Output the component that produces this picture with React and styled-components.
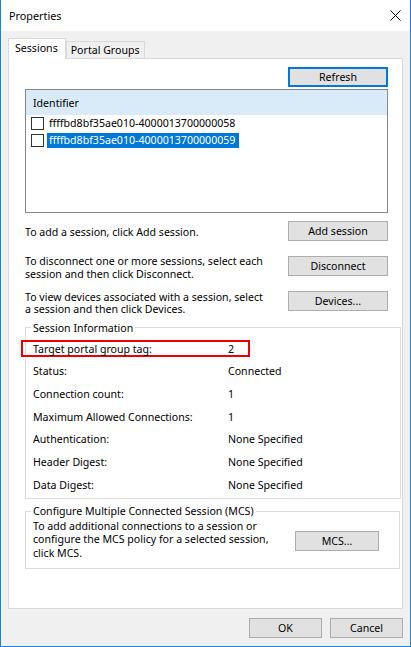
import React from "react";
import styled, { createGlobalStyle, css } from "styled-components";

const GlobalStyle = createGlobalStyle`
  * { box-sizing: border-box; }
  html, body { margin: 0; padding: 0; background: #ffffff; }
  body {
    font-family: "Noto Sans", "Open Sans", "Liberation Sans", sans-serif;
    font-size: 10.6px;
    color: #000;
  }
`;

const sessions = [
  { id: "ffffbd8bf35ae010-4000013700000058", selected: false },
  { id: "ffffbd8bf35ae010-4000013700000059", selected: true },
];

const sessionInfo = [
  { label: "Target portal group tag:", value: "2", highlight: true },
  { label: "Status:", value: "Connected" },
  { label: "Connection count:", value: "1" },
  { label: "Maximum Allowed Connections:", value: "1" },
  { label: "Authentication:", value: "None Specified" },
  { label: "Header Digest:", value: "None Specified" },
  { label: "Data Digest:", value: "None Specified" },
];

const CloseIcon = () => (
  <svg width="11" height="11" viewBox="0 0 11 11">
    <path d="M0.5 0.5 L10.5 10.5 M10.5 0.5 L0.5 10.5" stroke="#000" strokeWidth="1" />
  </svg>
);

const App = () => {
  return (
    <>
      <GlobalStyle />
      <Window>
        <TitleBar>
          <span>Properties</span>
          <CloseButton>
            <CloseIcon />
          </CloseButton>
        </TitleBar>

        <Body>
          <TabStrip>
            <Tab $active>Sessions</Tab>
            <Tab>Portal Groups</Tab>
          </TabStrip>

          <TabPanel>
            <RefreshRow>
              <Button $focused $width={100}>Refresh</Button>
            </RefreshRow>

            <ListBox>
              <ListHeader>Identifier</ListHeader>
              {sessions.map((s) => (
                <ListRow key={s.id}>
                  <CheckBox />
                  <ItemText $selected={s.selected}>{s.id}</ItemText>
                </ListRow>
              ))}
            </ListBox>

            <ActionRow>
              <HelpText>To add a session, click Add session.</HelpText>
              <Button $width={100}>Add session</Button>
            </ActionRow>
            <ActionRow>
              <HelpText>
                To disconnect one or more sessions, select each
                <br />
                session and then click Disconnect.
              </HelpText>
              <Button $width={100}>Disconnect</Button>
            </ActionRow>
            <ActionRow>
              <HelpText>
                To view devices associated with a session, select
                <br />
                a session and then click Devices.
              </HelpText>
              <Button $width={100}>Devices...</Button>
            </ActionRow>

            <GroupBox $right={1}>
              <Legend>Session Information</Legend>
              {sessionInfo.map((row) => (
                <InfoRow key={row.label} $highlight={row.highlight}>
                  <span>{row.label}</span>
                  <span>{row.value}</span>
                </InfoRow>
              ))}
            </GroupBox>

            <GroupBox $right={2} $top={5}>
              <Legend>Configure Multiple Connected Session (MCS)</Legend>
              <McsRow>
                <McsText>
                  To add additional connections to a session or
                  <br />
                  configure the MCS policy for a selected session,
                  <br />
                  click MCS.
                </McsText>
                <Button $width={84}>MCS...</Button>
              </McsRow>
            </GroupBox>
          </TabPanel>

          <Footer>
            <Button $width={73}>OK</Button>
            <Button $width={73}>Cancel</Button>
          </Footer>
        </Body>
      </Window>
    </>
  );
};

export default App;

/* ---------- Window chrome ---------- */

const Window = styled.div`
  width: 411px;
  height: 647px;
  display: flex;
  flex-direction: column;
  background: #f0f0f0;
  border: 1px solid #1883d7;
  border-top: none;
`;

const TitleBar = styled.div`
  height: 31px;
  flex-shrink: 0;
  background: #ffffff;
  display: flex;
  align-items: center;
  justify-content: space-between;
  padding: 0 9px 1px 8px;
  font-size: 10.8px;
`;

const CloseButton = styled.div`
  display: flex;
  align-items: center;
  padding-top: 1px;
`;

const Body = styled.div`
  flex: 1;
  display: flex;
  flex-direction: column;
  padding: 7px 7px 0 7px;
`;

/* ---------- Tabs ---------- */

const Tab = styled.div`
  height: 17px;
  padding: 0 4px;
  display: flex;
  align-items: center;
  background: #f0f0f0;
  border: 1px solid #d9d9d9;
  border-bottom: none;
  white-space: nowrap;

  ${(p) =>
    p.$active &&
    css`
      position: relative;
      z-index: 1;
      height: 21px;
      margin-bottom: -1px;
      padding: 0 7px 3px 6px;
      background: #ffffff;
    `}
`;

const TabStrip = styled.div`
  display: flex;
  align-items: flex-end;
  height: 20px;
`;

const TabPanel = styled.div`
  height: 551px;
  background: #ffffff;
  border: 1px solid #d9d9d9;
  padding: 8px 14px 0 16px;
  display: flex;
  flex-direction: column;
`;

/* ---------- Buttons ---------- */

const Button = styled.div`
  width: ${(p) => p.$width}px;
  height: 20px;
  flex-shrink: 0;
  display: flex;
  align-items: center;
  justify-content: center;
  background: #e1e1e1;
  border: 1px solid #adadad;
  white-space: nowrap;

  ${(p) =>
    p.$focused &&
    css`
      border: 2px solid #0078d7;
    `}
`;

const RefreshRow = styled.div`
  display: flex;
  justify-content: flex-end;
`;

/* ---------- Session list ---------- */

const ListBox = styled.div`
  margin-top: 2px;
  height: 124px;
  border: 1px solid #828790;
  background: #ffffff;
`;

const ListHeader = styled.div`
  height: 25px;
  display: flex;
  align-items: center;
  padding-left: 7px;
  background: #d9ebf9;
`;

const ListRow = styled.div`
  height: 17px;
  display: flex;
  align-items: center;
  padding-left: 5px;
`;

const CheckBox = styled.div`
  width: 13px;
  height: 13px;
  border: 1px solid #333333;
  background: #ffffff;
  margin-right: 3px;
`;

const ItemText = styled.span`
  height: 15px;
  line-height: 15px;
  padding: 0 4px 0 2px;
  white-space: nowrap;

  ${(p) =>
    p.$selected &&
    css`
      background: #0078d7;
      color: #ffffff;
    `}
`;

/* ---------- Action rows ---------- */

const ActionRow = styled.div`
  height: 35.3px;
  display: flex;
  align-items: center;
  justify-content: space-between;
`;

const HelpText = styled.div`
  line-height: 12.5px;
  padding-top: 4px;
  white-space: nowrap;
`;

/* ---------- Group boxes ---------- */

const GroupBox = styled.fieldset`
  margin: ${(p) => p.$top || 2}px ${(p) => p.$right - 14}px 0 0;
  padding: 2px 0 2px 0;
  border: 1px solid #dcdcdc;
  min-width: 0;
`;

const Legend = styled.legend`
  margin-left: 5px;
  padding: 0 2px;
  line-height: 14px;
  white-space: nowrap;
`;

const InfoRow = styled.div`
  display: grid;
  grid-template-columns: 195px 1fr;
  align-items: center;
  height: 22.7px;
  padding-left: 7px;
  white-space: nowrap;

  ${(p) =>
    p.$highlight &&
    css`
      width: 229px;
      height: 17px;
      margin: 3px 0 3px -5px;
      padding-left: 10px;
      border: 2px solid #ee0000;
    `}
`;

const McsRow = styled.div`
  display: flex;
  align-items: center;
  justify-content: space-between;
  padding: 0 20px 6px 7px;

  & > ${Button} {
    margin-top: 3px;
  }
`;

const McsText = styled.div`
  line-height: 13.3px;
  white-space: nowrap;
`;

/* ---------- Footer ---------- */

const Footer = styled.div`
  display: flex;
  justify-content: flex-end;
  gap: 8px;
  padding-top: 9px;
`;
